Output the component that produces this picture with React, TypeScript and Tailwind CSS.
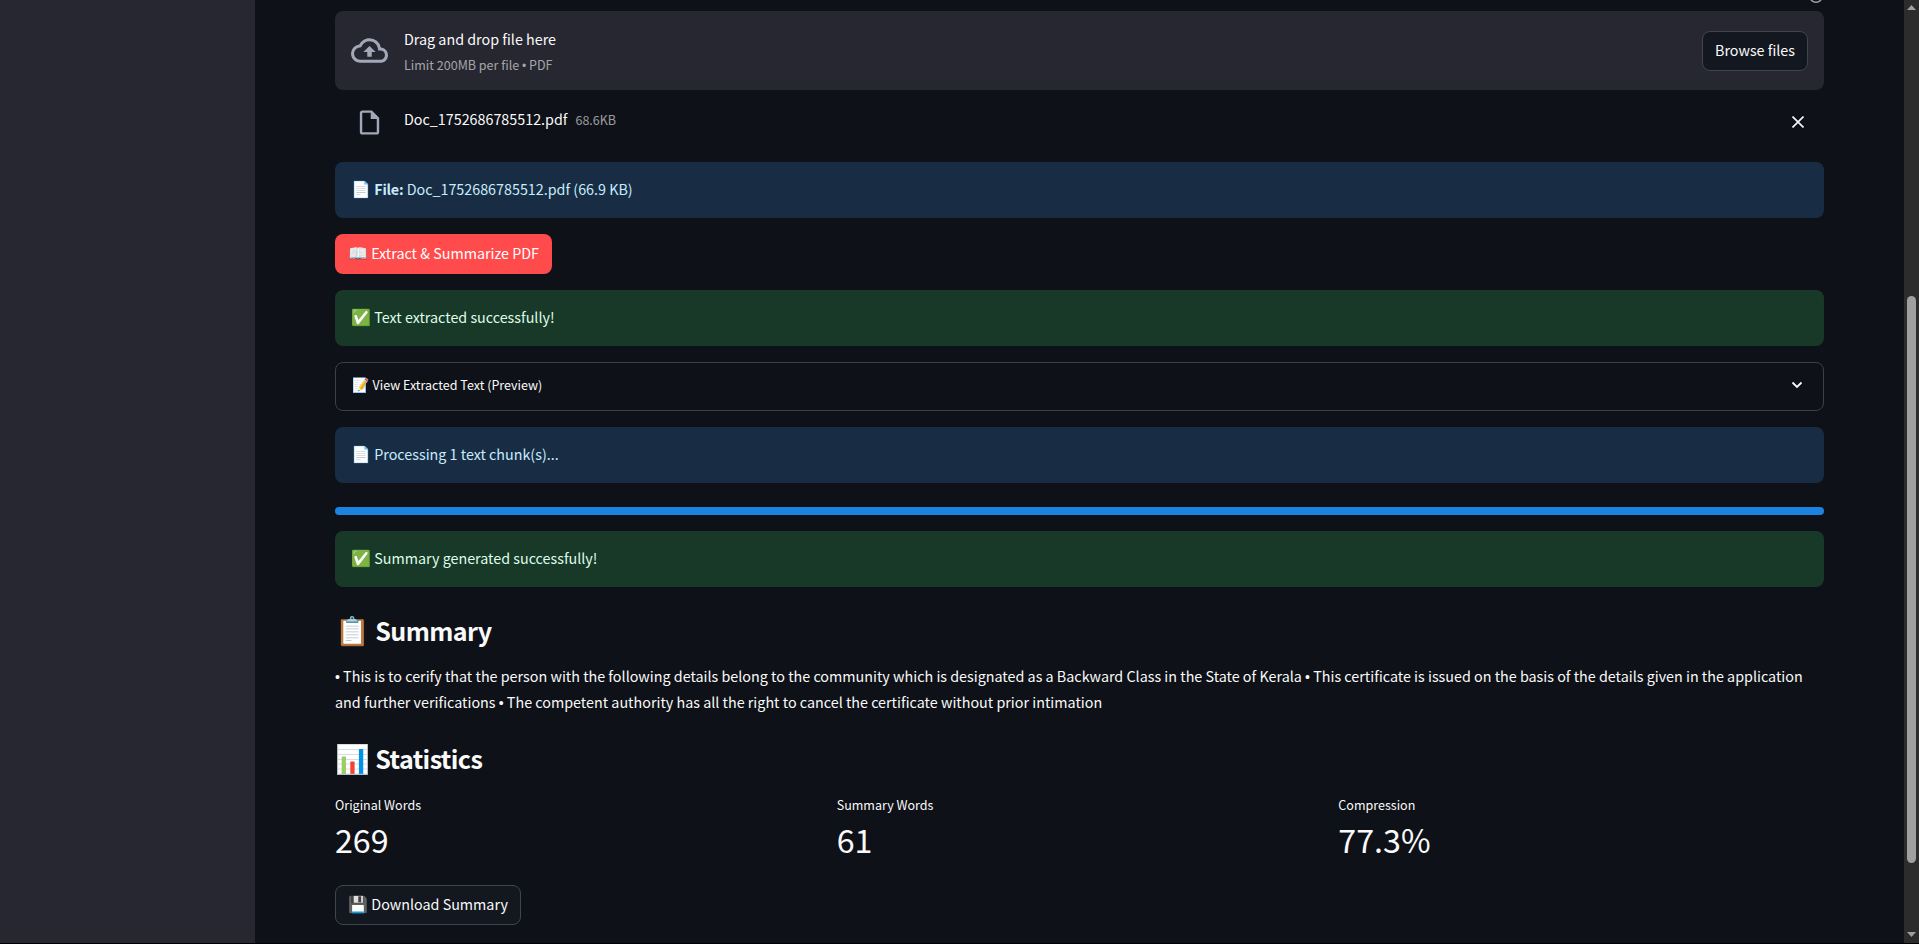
import React from "react";
import { MdOutlineCloudUpload, MdOutlineInsertDriveFile } from "react-icons/md";

const body = "text-[14.32px] leading-6";
const small = "text-[12.53px] leading-5";

function Emoji({ children, className = "text-[16px]" }: { children: string; className?: string }) {
  return <span className={`leading-none ${className}`}>{children}</span>;
}

function Bullet({ className = "text-[14px]" }: { className?: string }) {
  return <span className={`font-['Liberation_Sans',sans-serif] leading-none ${className}`}>•</span>;
}

function Alert({ tone, emoji, className = "", children }: { tone: "info" | "success"; emoji: string; className?: string; children: React.ReactNode }) {
  const colors = tone === "info" ? "bg-[#182d43] text-[#c7ebff]" : "bg-[#183828] text-[#dffde9]";
  return (
    <div className={`h-14 rounded-lg px-4 pt-[15px] whitespace-pre ${body} ${colors} ${className}`}>
      <Emoji>{emoji}</Emoji> {children}
    </div>
  );
}

function Heading({ emoji, children }: { emoji: string; children: string }) {
  return (
    <h3 className="mt-[26px] text-[25.07px] font-bold leading-[34px] tracking-[-0.6px]">
      <Emoji className="mr-[0.8px] text-[28px]">{emoji}</Emoji> {children}
    </h3>
  );
}

function Metric({ label, value }: { label: string; value: string }) {
  return (
    <div className="flex-1">
      <div className={small}>{label}</div>
      <div className="mt-[2px] text-[32.2px] leading-[44px]">{value}</div>
    </div>
  );
}

export default function App() {
  return (
    <div className="flex h-[944px] w-full overflow-hidden border-b border-black bg-[#0e1117] font-['Noto_Sans_CJK_SC',sans-serif] text-[#fafafa]">
      <aside className="w-[255px] shrink-0 bg-[#262730]" />
      <main className="relative flex-1 pl-20 pr-20 pt-[11px]">
        <svg className="absolute right-[80px] top-[-12px]" width="16" height="16" viewBox="0 0 16 16" fill="none" stroke="#a3a4a9" strokeWidth="1.4">
          <circle cx="8" cy="8" r="6.2" />
        </svg>
        <section className="flex h-[79px] items-center rounded-lg bg-[#262730] px-4">
          <MdOutlineCloudUpload className="text-[#a3a8b8]" size={37} />
          <div className="ml-4 flex-1">
            <div className={body}>Drag and drop file here</div>
            <div className={`mt-1 text-[#fafafa]/60 ${small}`}>Limit 200MB per file <Bullet className="text-[12px]" /> PDF</div>
          </div>
          <button className={`h-10 w-[106px] rounded-lg border border-[#41444c] bg-[#131720] pb-0.5 ${body}`}>Browse files</button>
        </section>
        <div className="flex h-[72px] items-start pl-5 pt-[17px]">
          <MdOutlineInsertDriveFile className="mt-px text-[#a3a8b8]" size={29} />
          <div className={`ml-5 flex-1 ${body}`}>
            Doc_1752686785512.pdf<span className="ml-2 text-[12.53px] text-[#fafafa]/60">68.6KB</span>
          </div>
          <svg className="mr-5 mt-[9px]" width="12" height="12" viewBox="0 0 12 12" stroke="#fafafa" strokeWidth="1.6">
            <path d="M.5.5l11 11M11.5.5l-11 11" />
          </svg>
        </div>
        <Alert tone="info" emoji="📄"><b className="font-bold tracking-[-0.2px]">File:</b> Doc_1752686785512.pdf (66.9 KB)</Alert>
        <button className={`mt-4 block h-10 w-[217px] rounded-lg bg-[#ff4b4b] pb-0.5 text-white ${body}`}>
          <Emoji>📖</Emoji> Extract &amp; Summarize PDF
        </button>
        <Alert tone="success" emoji="✅" className="mt-4">Text extracted successfully!</Alert>
        <div className={`mt-4 flex h-[49px] items-center justify-between rounded-lg border border-[#3e4044] pb-[3px] pl-4 pr-5 ${small}`}>
          <span><Emoji className="mr-[0.7px] text-[14px]">📝</Emoji> View Extracted Text (Preview)</span>
          <svg width="12" height="8" viewBox="0 0 12 8" fill="none" stroke="#fafafa" strokeWidth="1.8">
            <path d="M1.5 1.5L6 6l4.5-4.5" />
          </svg>
        </div>
        <Alert tone="info" emoji="📄" className="mt-4">Processing 1 text chunk(s)...</Alert>
        <div className="mt-6 h-2 rounded-full bg-[#1c83e1]" />
        <Alert tone="success" emoji="✅" className="mt-4">Summary generated successfully!</Alert>
        <Heading emoji="📋">Summary</Heading>
        <p className="mt-4 text-[14.33px] leading-[26px]">
          <Bullet /> This is to cerify that the person with the following details belong to the community which is designated as a Backward Class in the State of Kerala <Bullet /> This certificate is issued on the basis of the details given in the application and further verifications <Bullet /> The competent authority has all the right to cancel the certificate without prior intimation
        </p>
        <Heading emoji="📊">Statistics</Heading>
        <div className="mt-5 flex gap-4">
          <Metric label="Original Words" value="269" />
          <Metric label="Summary Words" value="61" />
          <Metric label="Compression" value="77.3%" />
        </div>
        <button className={`mt-6 block h-10 w-[186px] rounded-lg border border-[#41444c] bg-[#131720] pb-0.5 ${body}`}>
          <Emoji>💾</Emoji> Download Summary
        </button>
      </main>
      <div className="flex w-[15px] shrink-0 flex-col items-center bg-[#2c2c2c]">
        <svg className="mt-[5px]" width="9" height="5" viewBox="0 0 9 5" fill="#9f9f9f"><path d="M0 5L4.5 0 9 5z" /></svg>
        <div className="mt-[286px] h-[567px] w-[9px] rounded-full bg-[#9f9f9f]" />
        <svg className="mt-[69px]" width="9" height="5" viewBox="0 0 9 5" fill="#9f9f9f"><path d="M0 0h9L4.5 5z" /></svg>
      </div>
    </div>
  );
}
